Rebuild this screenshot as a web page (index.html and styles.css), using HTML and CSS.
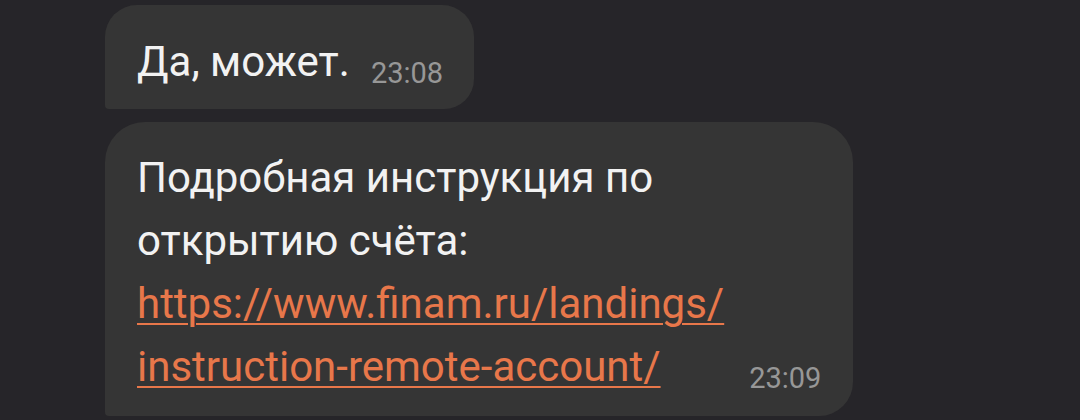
FILE: index.html
```html
<!DOCTYPE html>
<html lang="ru">
<head>
<meta charset="utf-8">
<link rel="stylesheet" href="styles.css">
</head>
<body>
<div class="chat">
  <div class="bubble short">
    <div class="text">Да, может.</div>
    <div class="time">23:08</div>
  </div>
  <div class="bubble">
    <div class="text">Подробная инструкция по<br>открытию счёта:<br><a class="link" href="#">https://www.finam.ru/landings/<br>instruction-remote-account/</a></div>
    <div class="time">23:09</div>
  </div>
</div>
</body>
</html>
```

FILE: styles.css
```css
html, body {
  margin: 0;
  padding: 0;
  background: #262529;
  width: 1080px;
  height: 420px;
  overflow: hidden;
}
body {
  font-family: Roboto, "Noto Sans", sans-serif;
}
.chat {
  display: flex;
  flex-direction: column;
  align-items: flex-start;
  gap: 13px;
  padding: 5px 0 0 105px;
}
.bubble {
  display: flex;
  align-items: flex-end;
  gap: 25px;
  background: #353535;
  border-radius: 40px 40px 34px 4px;
  padding: 24px 32px 18px 32px;
}
.bubble.short {
  border-radius: 32px 32px 30px 4px;
  gap: 21px;
  padding: 25px 31px 16px 32px;
}
.text {
  color: #f2f2f2;
  font-size: 42px;
  line-height: 63px;
}
.link {
  color: #e8774a;
  text-decoration: underline;
  text-decoration-thickness: 2px;
  text-underline-offset: 5px;
}
.time {
  color: #979797;
  font-size: 29px;
  line-height: 40px;
}
```
